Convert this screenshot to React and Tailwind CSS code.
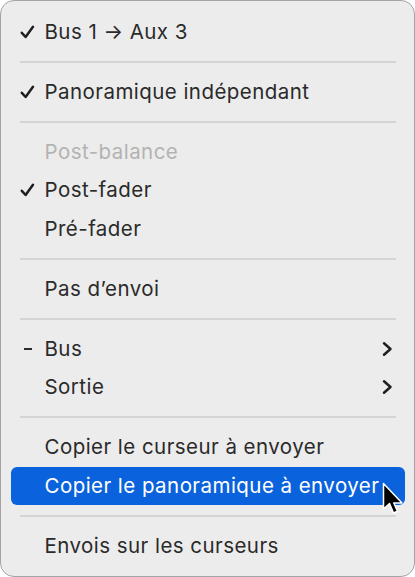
import React from "react";

function Check() {
  return (
    <svg width="15" height="14" viewBox="0 0 15 14" className="absolute left-[9px] top-1/2 -translate-y-1/2">
      <path d="M1.8 7.8 L5.6 12 L13 1.8" fill="none" stroke="#1f1f1f" strokeWidth="2.5" strokeLinecap="round" strokeLinejoin="round" />
    </svg>
  );
}

function Dash() {
  return <span className="absolute left-[13px] top-1/2 -translate-y-1/2 w-[8px] h-[2px] bg-[#2b2b2b]" />;
}

function Chevron() {
  return (
    <svg width="11" height="15" viewBox="0 0 11 15" className="absolute right-[12px] top-1/2 -translate-y-1/2">
      <path d="M2 1.8 L8.5 7.5 L2 13.2" fill="none" stroke="#1f1f1f" strokeWidth="2.5" strokeLinecap="round" strokeLinejoin="round" />
    </svg>
  );
}

function Item({ children, check, dash, sub, disabled, active }) {
  return (
    <div
      className={
        "relative h-[38.5px] flex items-center pl-[34px] rounded-[6px] text-[20.5px] tracking-[0.45px] leading-none " +
        (active ? "bg-[#0a63dc] text-white" : disabled ? "text-[#b3b3b3]" : "text-[#2a2a2a]")
      }
    >
      {check && <Check />}
      {dash && <Dash />}
      <span>{children}</span>
      {sub && <Chevron />}
    </div>
  );
}

function Sep() {
  return (
    <div className="h-[21.5px] flex items-center px-[9px]">
      <div className="h-[2px] w-full bg-[#d4d4d4]" />
    </div>
  );
}

export default function App() {
  return (
    <div className="w-[415px] h-[577px] bg-white" style={{ fontFamily: "Inter, 'Noto Sans', sans-serif" }}>
      <div className="relative w-full h-full bg-[#ececec] border-[1.5px] border-[#a4a4a4] rounded-[14px] px-[9.5px] pt-[11.5px] pb-[9px]">
        <Item check>Bus 1 → Aux 3</Item>
        <Sep />
        <Item check>Panoramique indépendant</Item>
        <Sep />
        <Item disabled>Post-balance</Item>
        <Item check>Post-fader</Item>
        <Item>Pré-fader</Item>
        <Sep />
        <Item>Pas d’envoi</Item>
        <Sep />
        <Item dash sub>Bus</Item>
        <Item sub>Sortie</Item>
        <Sep />
        <Item>Copier le curseur à envoyer</Item>
        <Item active>Copier le panoramique à envoyer</Item>
        <Sep />
        <Item>Envois sur les curseurs</Item>
        <svg width="24" height="35" viewBox="0 0 24 35" className="absolute left-[380.5px] top-[480.5px]">
          <path d="M1.5 1.5 L1.5 27 L7.5 21.5 L11.5 31 L15.5 29.3 L11.8 21 L20 21 Z" fill="#000" stroke="#fff" strokeWidth="1.5" strokeLinejoin="round" />
        </svg>
      </div>
    </div>
  );
}
